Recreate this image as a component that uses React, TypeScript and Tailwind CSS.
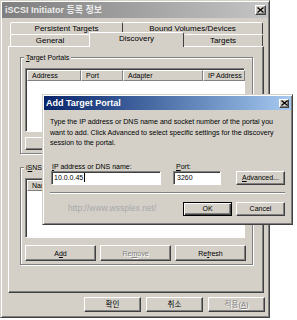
import React from "react";

const outset =
  "border border-t-white border-l-white border-r-[#404040] border-b-[#404040] shadow-[inset_-1px_-1px_0_#808080]";
const sunken =
  "border border-t-[#808080] border-l-[#808080] border-r-white border-b-white shadow-[inset_1px_1px_0_#404040]";

function U({ children }: { children: React.ReactNode }) {
  return <span className="underline underline-offset-1">{children}</span>;
}

function Btn({
  children,
  className = "",
  disabled = false,
  def = false,
}: {
  children?: React.ReactNode;
  className?: string;
  disabled?: boolean;
  def?: boolean;
}) {
  const frame = def
    ? "border border-black shadow-[inset_1px_1px_0_#fff,inset_-1px_-1px_0_#404040,inset_-2px_-2px_0_#808080]"
    : outset;
  return (
    <div
      className={`flex items-center justify-center bg-[#d4d0c8] leading-none ${frame} ${
        disabled ? "text-[#808080] [text-shadow:1px_1px_0_#fff]" : "text-black"
      } ${className}`}
    >
      {children}
    </div>
  );
}

function CloseBox({ className = "" }: { className?: string }) {
  return (
    <div className={`flex items-center justify-center bg-[#d4d0c8] ${outset} ${className}`}>
      <svg width="7" height="6" viewBox="0 0 7 6">
        <path d="M0.5 0.5 L6.5 5.5 M6.5 0.5 L0.5 5.5" stroke="#000" strokeWidth="1.3" />
      </svg>
    </div>
  );
}

function Group({
  label,
  children,
  className = "",
}: {
  label: React.ReactNode;
  children: React.ReactNode;
  className?: string;
}) {
  return (
    <div
      className={`relative border border-[#808080] shadow-[inset_1px_1px_0_#fff,1px_1px_0_#fff] ${className}`}
    >
      <div className="absolute -top-[5px] left-[3px] bg-[#d4d0c8] px-[2px] text-[7px] leading-[9px]">
        {label}
      </div>
      {children}
    </div>
  );
}

function HeaderCell({ w, children }: { w: string; children?: React.ReactNode }) {
  return (
    <div
      className={`${w} h-[11px] shrink-0 flex items-center pl-[4px] text-[7px] leading-none bg-[#d4d0c8] border border-t-white border-l-white border-r-[#808080] border-b-[#808080]`}
    >
      {children}
    </div>
  );
}

export default function App() {
  return (
    <div className="w-[297px] h-[320px] bg-white overflow-hidden relative font-['Liberation_Sans','Noto_Sans_CJK_KR',sans-serif] text-black">
      {/* main window */}
      <div className="w-[270px] h-[318px] bg-[#d4d0c8] border border-t-[#d4d0c8] border-l-[#d4d0c8] border-r-[#404040] border-b-[#404040] shadow-[inset_1px_1px_0_#fff,inset_-1px_-1px_0_#808080] p-[1px] flex flex-col">
        {/* title bar */}
        <div className="h-[16px] flex items-center justify-between pl-[3px] pr-[2px] bg-linear-to-r from-[#7f7f7f] to-[#c4c4c4]">
          <span className="text-[9px] font-bold text-[#ececec] leading-none">iSCSI Initiator 등록 정보</span>
          <CloseBox className="w-[11px] h-[10px]" />
        </div>

        {/* tabs */}
        <div className="mt-[4px] pl-[8px] flex">
          <div className="w-[113px] h-[12px] flex items-center justify-center text-[8px] leading-none border-t border-l border-r border-t-white border-l-white border-r-[#404040] rounded-t-[2px]">
            Persistent Targets
          </div>
          <div className="w-[140px] h-[12px] flex items-center justify-center text-[8px] leading-none border-t border-r border-t-white border-r-[#404040] rounded-t-[2px]">
            Bound Volumes/Devices
          </div>
        </div>
        <div className="pl-[8px] flex items-end h-[12px]">
          <div className="w-[79px] h-[12px] flex items-center justify-center text-[8px] leading-none border-t border-l border-t-white border-l-white rounded-t-[2px]">
            General
          </div>
          <div className="relative z-10 w-[95px] h-[15px] -mb-[1px] flex items-start pt-[2px] justify-center text-[8px] leading-none bg-[#d4d0c8] border-t border-l border-r border-t-white border-l-white border-r-[#404040] rounded-t-[2px]">
            Discovery
          </div>
          <div className="w-[79px] h-[12px] flex items-center justify-center text-[8px] leading-none border-t border-r border-t-white border-r-[#404040] rounded-t-[2px]">
            Targets
          </div>
        </div>

        {/* panel */}
        <div className="ml-[6px] w-[256px] h-[247px] border border-t-white border-l-white border-r-[#404040] border-b-[#404040] shadow-[inset_-1px_-1px_0_#808080] pl-[11px] pt-[10px]">
          <Group
            className="w-[233px] h-[97px] pl-[4px] pt-[10px]"
            label={
              <>
                <U>T</U>arget Portals
              </>
            }
          >
            <div className={`w-[220px] h-[64px] bg-white ${sunken} p-[1px]`}>
              <div className="flex">
                <HeaderCell w="w-[54px]">Address</HeaderCell>
                <HeaderCell w="w-[42px]">Port</HeaderCell>
                <HeaderCell w="w-[80px]">Adapter</HeaderCell>
                <HeaderCell w="w-[42px]">IP Address</HeaderCell>
              </div>
            </div>
            {/* these buttons lie under the dialog; only their left edge shows */}
            <div className="flex gap-[4px] mt-[5px]">
              <Btn className="w-[71px] h-[13px]" />
              <Btn className="w-[71px] h-[13px]" />
              <Btn className="w-[71px] h-[13px]" />
            </div>
          </Group>

          <Group
            className="mt-[13px] w-[233px] h-[98px] pl-[4px] pt-[10px]"
            label={
              <>
                i<U>S</U>NS Servers
              </>
            }
          >
            <div className={`w-[220px] h-[60px] bg-white ${sunken} p-[1px]`}>
              <div className="flex">
                <HeaderCell w="w-[218px]">Name</HeaderCell>
              </div>
            </div>
            <div className="flex gap-[4px] mt-[7px]">
              <Btn className="w-[71px] h-[16px] text-[7px]">
                A<U>d</U>d
              </Btn>
              <Btn className="w-[71px] h-[16px] text-[7px]" disabled>
                Re<U>m</U>ove
              </Btn>
              <Btn className="w-[71px] h-[16px] text-[7px]">
                Re<U>f</U>resh
              </Btn>
            </div>
          </Group>
        </div>

        {/* bottom buttons */}
        <div className="mt-[4px] pr-[3px] flex justify-end gap-[5px]">
          <Btn className="w-[57px] h-[15px] text-[7.5px]">확인</Btn>
          <Btn className="w-[57px] h-[15px] text-[7.5px]">취소</Btn>
          <Btn className="w-[57px] h-[15px] text-[7.5px]" disabled>
            적용(<U>A</U>)
          </Btn>
        </div>
      </div>

      {/* dialog */}
      <div className="absolute left-[42px] top-[94px] w-[251px] h-[131px] z-20 bg-[#d4d0c8] border border-t-[#d4d0c8] border-l-[#d4d0c8] border-r-[#404040] border-b-[#404040] shadow-[inset_1px_1px_0_#fff,inset_-1px_-1px_0_#808080] p-[1px] flex flex-col">
        <div className="h-[14px] flex items-center justify-between pl-[2px] pr-[2px] bg-linear-to-r from-[#0a246a] to-[#a6caf0]">
          <span className="text-[9px] font-bold text-white leading-none">Add Target Portal</span>
          <CloseBox className="w-[10px] h-[9px]" />
        </div>
        <div className="pl-[6px] pt-[7px] text-[7.1px] leading-[10.5px] whitespace-nowrap">
          Type the IP address or DNS name and socket number of the portal you
          <br />
          want to add. Click Advanced to select specific settings for the discovery
          <br />
          session to the portal.
        </div>
        <div className="mt-[13px] pl-[7px] flex items-end">
          <div className="w-[110px] flex flex-col">
            <div className="h-[9px] ml-[1px] text-[7px] leading-[9px]">
              <U>I</U>P address or DNS name:
            </div>
            <div className={`h-[14px] bg-white ${sunken} flex items-center pl-[2px] text-[7px] leading-none`}>
              10.0.0.45
              <span className="inline-block w-[1px] h-[9px] bg-black ml-[1px]" />
            </div>
          </div>
          <div className="ml-[12px] w-[48px] flex flex-col">
            <div className="h-[9px] ml-[3px] text-[7px] leading-[9px]">
              <U>P</U>ort:
            </div>
            <div className={`h-[14px] bg-white ${sunken} flex items-center pl-[3px] text-[7px] leading-none`}>
              3260
            </div>
          </div>
          <Btn className="ml-[15px] w-[49px] h-[14px] text-[7px]">
            <U>A</U>dvanced...
          </Btn>
        </div>
        <div className="mt-[7px] ml-[6px] w-[235px] h-[2px] border-t border-t-[#808080] border-b border-b-white" />
        <div className="mt-[8px] pl-[24px] flex items-center">
          <span className="text-[8.5px] leading-none text-[#a8a8a8]">http://www.wssplex.net/</span>
          <div className="flex-1" />
          <Btn def className="w-[49px] h-[14px] text-[7px] mr-[4px]">
            OK
          </Btn>
          <Btn className="w-[49px] h-[14px] text-[7px] mr-[6px]">Cancel</Btn>
        </div>
      </div>
    </div>
  );
}
